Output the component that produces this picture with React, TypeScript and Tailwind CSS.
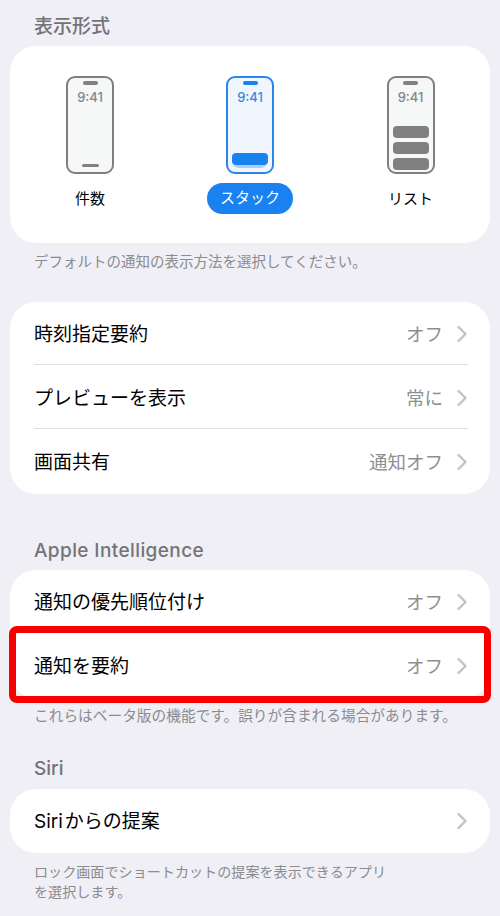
import React from "react";

const Chevron = () => (
  <svg width="12" height="18" viewBox="0 0 12 18" fill="none" className="shrink-0">
    <path d="M2.5 2 L9.5 9 L2.5 16" stroke="#c3c3c7" strokeWidth="2.4" strokeLinecap="round" strokeLinejoin="round" />
  </svg>
);

const Row = ({ label, value, divider }: { label: React.ReactNode; value?: string; divider?: boolean }) => (
  <div className="relative flex h-16 items-center justify-between pl-6 pr-[22px]">
    <span className="mt-[2px] text-[19px] leading-6 text-black">{label}</span>
    <div className="flex items-center gap-[13px]">
      {value && <span className="text-[18.5px] leading-6 text-[#8e8e93]">{value}</span>}
      <Chevron />
    </div>
    {divider && <div className="absolute bottom-px left-6 right-[22px] h-px bg-[#dfdfe2]" />}
  </div>
);

const Phone = ({ blue, children, bottomBar }: { blue?: boolean; children?: React.ReactNode; bottomBar?: boolean }) => (
  <div className={`relative flex h-[98px] w-12 flex-col items-center rounded-[9px] border-[2.5px] ${blue ? "border-[#2a86ea] bg-[#f0f6fd]" : "border-[#7f7f7f] bg-[#f6f7f7]"}`}>
    <div className={`mt-[2.5px] h-[4px] w-[15px] rounded-full ${blue ? "bg-[#1a82f0]" : "bg-[#808080]"}`} />
    <span className={`mt-[2px] text-[13px] leading-[20px] font-medium ${blue ? "text-[#3b88de]" : "text-[#858585]"}`}>9:41</span>
    <div className="flex w-full flex-1 flex-col items-center justify-end">{children}</div>
    {bottomBar && <div className="absolute bottom-[5px] h-[3px] w-[17px] rounded-full bg-[#808080]" />}
  </div>
);

export default function App() {
  return (
    <div
      lang="ja"
      className="relative h-[916px] w-[500px] overflow-hidden bg-[#efeff5] font-['Inter','Noto_Sans_CJK_JP',sans-serif]"
    >
      <div className="px-[10px] pt-[14px]">
        <h2 className="pl-6 text-[19px] leading-[26px] font-medium text-[#737378]">表示形式</h2>

        <div className="mt-[6px] flex h-[197px] rounded-[26px] bg-white pt-[30px]">
          <div className="flex w-[160px] flex-col items-center">
            <Phone bottomBar />
            <span className="mt-[15px] text-[15px] leading-[20px] text-black">件数</span>
          </div>
          <div className="flex w-[160px] flex-col items-center">
            <Phone blue>
              <div className="relative mb-[7px] w-[36px]">
                <div className="absolute -bottom-[3px] left-[1px] right-[1px] h-[6px] rounded-b-[6px] bg-[#a9cff8]" />
                <div className="relative h-[12.5px] rounded-[4px] bg-[#1a82f0]" />
              </div>
            </Phone>
            <span className="mt-[9px] flex h-[31px] w-[86px] items-center justify-center rounded-full bg-[#1a82f0] text-[15px] text-white">スタック</span>
          </div>
          <div className="flex w-[160px] flex-col items-center pl-px">
            <Phone>
              <div className="mb-[2.5px] flex flex-col gap-[4px]">
                <div className="h-[12px] w-[36px] rounded-[4px] bg-[#808080]" />
                <div className="h-[12px] w-[36px] rounded-[4px] bg-[#808080]" />
                <div className="h-[12px] w-[36px] rounded-[4px] bg-[#808080]" />
              </div>
            </Phone>
            <span className="mt-[15px] text-[15px] leading-[20px] text-black">リスト</span>
          </div>
        </div>

        <p className="mt-[9px] pl-6 text-[14.5px] leading-5 text-[#8b8b90]">デフォルトの通知の表示方法を選択してください。</p>

        <div className="mt-[30px] rounded-[26px] bg-white">
          <Row label="時刻指定要約" value="オフ" divider />
          <Row label="プレビューを表示" value="常に" divider />
          <Row label="画面共有" value="通知オフ" />
        </div>

        <h2 className="mt-[44px] pl-6 text-[19px] leading-[26px] font-medium tracking-[0.4px] text-[#737378]">Apple Intelligence</h2>

        <div className="relative mt-[6px] rounded-[26px] bg-white">
          <Row label="通知の優先順位付け" value="オフ" />
          <Row label="通知を要約" value="オフ" />
          <div className="absolute top-[56px] -right-px -bottom-[5px] -left-px rounded-[8px] border-[7px] border-[#f60000]" />
        </div>

        <p className="mt-[8px] pl-6 text-[14.7px] leading-5 text-[#8b8b90]">これらはベータ版の機能です。誤りが含まれる場合があります。</p>

        <h2 className="mt-[30px] pl-6 text-[19px] leading-[26px] font-medium text-[#737378]">Siri</h2>

        <div className="mt-[7px] rounded-[26px] bg-white">
          <Row label={<>Siri<span className="ml-[2px]">からの提案</span></>} />
        </div>

        <p className="mt-[9px] pl-6 pr-4 text-[14.1px] leading-5 text-[#8b8b90]">
          ロック画面でショートカットの提案を表示できるアプリ
          <br />
          を選択します。
        </p>
      </div>
    </div>
  );
}
